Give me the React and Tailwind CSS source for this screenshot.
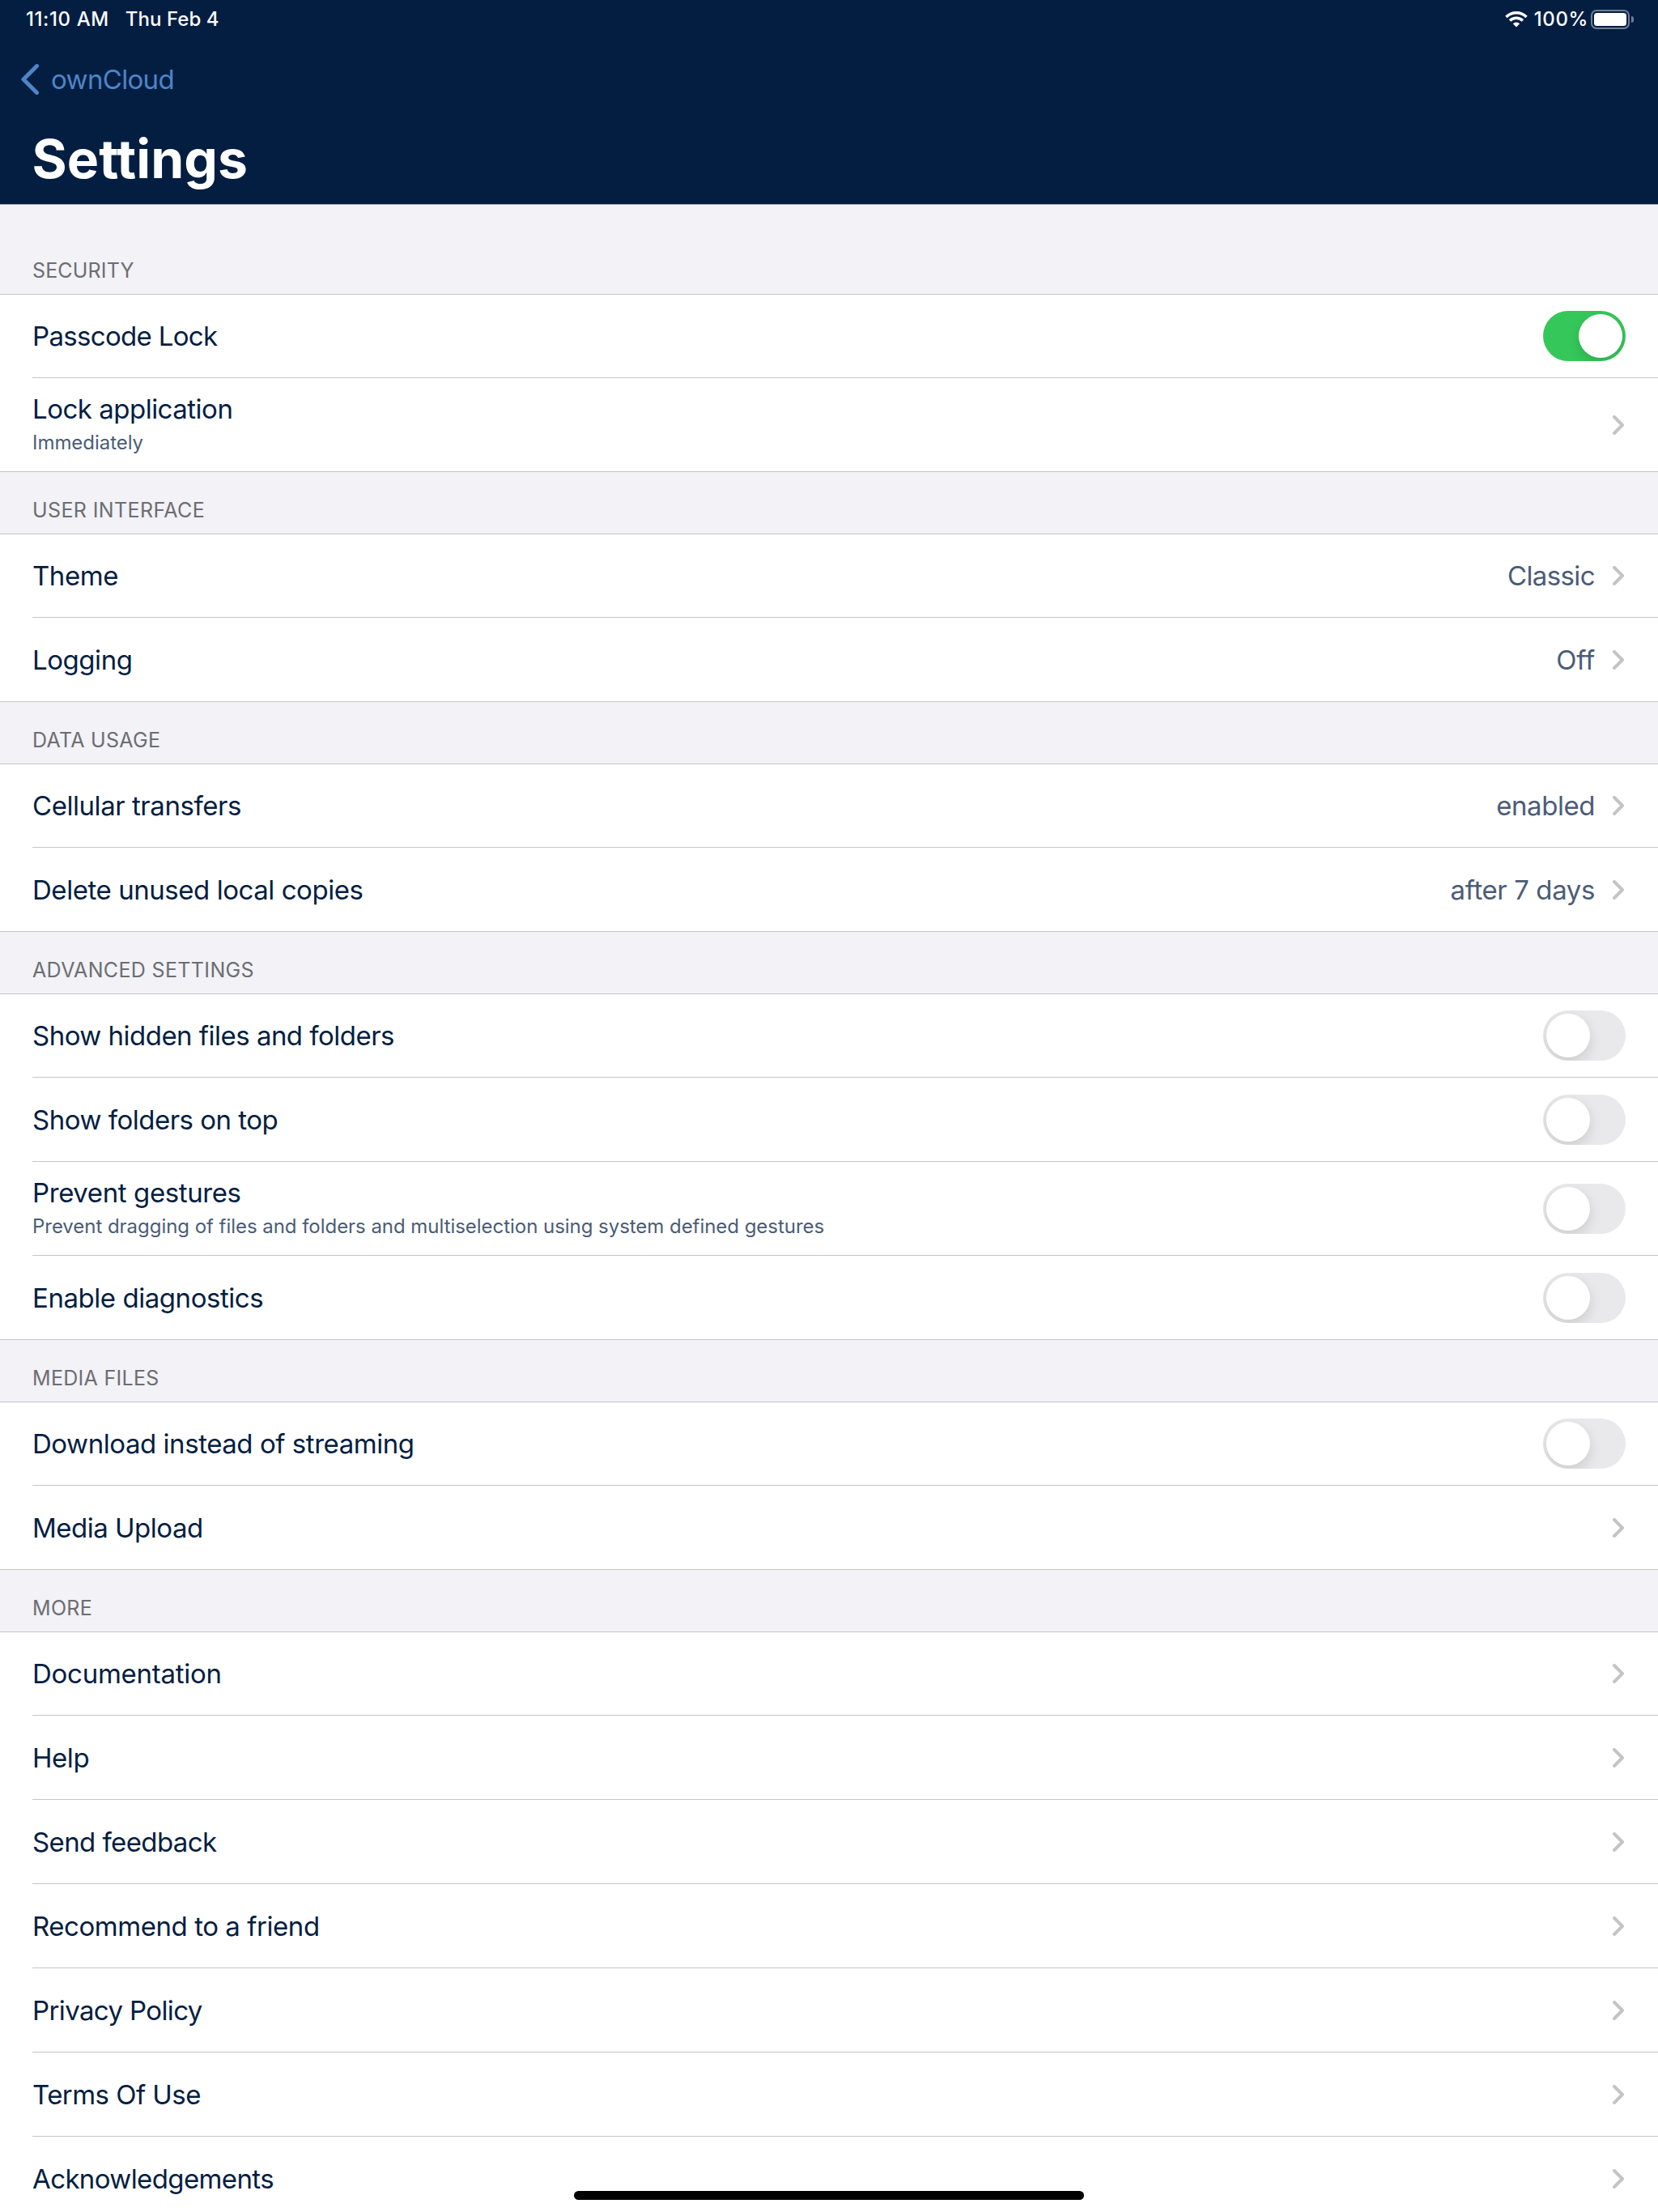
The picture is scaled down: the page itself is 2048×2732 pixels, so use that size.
const SECTIONS = [
  {
    title: "SECURITY",
    spacing: "tracking-[0.15px]",
    rows: [
      { label: "Passcode Lock", spacing: "tracking-[-0.68px]", toggle: true, on: true },
      { label: "Lock application", spacing: "tracking-[-0.5px]", detail: "Immediately" },
    ],
  },
  {
    title: "USER INTERFACE",
    spacing: "tracking-[0.38px]",
    rows: [
      { label: "Theme", value: "Classic", valueSpacing: "tracking-[-0.6px]" },
      { label: "Logging", value: "Off", valueSpacing: "tracking-[-0.2px]" },
    ],
  },
  {
    title: "DATA USAGE",
    rows: [
      { label: "Cellular transfers", value: "enabled" },
      { label: "Delete unused local copies", value: "after 7 days", valueSpacing: "tracking-[-0.4px]" },
    ],
  },
  {
    title: "ADVANCED SETTINGS",
    spacing: "tracking-[0.35px]",
    rows: [
      { label: "Show hidden files and folders", spacing: "tracking-[-0.52px]", toggle: true },
      { label: "Show folders on top", spacing: "tracking-[-0.5px]", toggle: true },
      {
        label: "Prevent gestures",
        spacing: "tracking-[-0.4px]",
        detail: "Prevent dragging of files and folders and multiselection using system defined gestures",
        toggle: true,
      },
      { label: "Enable diagnostics", toggle: true },
    ],
  },
  {
    title: "MEDIA FILES",
    rows: [
      { label: "Download instead of streaming", toggle: true },
      { label: "Media Upload", spacing: "tracking-[-0.5px]" },
    ],
  },
  {
    title: "MORE",
    rows: [
      { label: "Documentation", spacing: "tracking-[-0.26px]" },
      { label: "Help" },
      { label: "Send feedback", spacing: "tracking-[-0.6px]" },
      { label: "Recommend to a friend" },
      { label: "Privacy Policy", spacing: "tracking-[-0.62px]" },
      { label: "Terms Of Use", spacing: "tracking-[-0.55px]" },
      { label: "Acknowledgements", spacing: "tracking-[-0.62px]" },
    ],
  },
];

function Wifi() {
  return (
    <svg className="h-[20px] w-[28px]" viewBox="0 0 28 20" fill="none" stroke="white" strokeWidth="3.5">
      <path d="M1.5 7a17.7 17.7 0 0 1 25 0" />
      <path d="M6.1 11.6a11.2 11.2 0 0 1 15.8 0" />
      <path d="M14 19.5l-4.2-4.2a6 6 0 0 1 8.4 0z" fill="white" stroke="none" />
    </svg>
  );
}

function Battery() {
  return (
    <div className="flex items-center gap-[2px]">
      <div className="h-[24px] w-[48px] rounded-[7px] border-2 border-[#6f7e96] p-[2px]">
        <div className="h-full rounded-[3.5px] bg-white" />
      </div>
      <div className="h-[8px] w-[3px] rounded-r-full bg-[#6f7e96]" />
    </div>
  );
}

function Toggle({ on }) {
  return (
    <div
      className={
        "flex h-[62px] w-[102px] shrink-0 items-center overflow-hidden rounded-full p-1 " +
        (on ? "justify-end bg-[#35c759]" : "bg-[#e9e9eb]")
      }
    >
      <div className="size-[54px] rounded-full bg-white shadow-[0_6px_16px_rgba(0,0,0,0.13)]" />
    </div>
  );
}

function Chevron() {
  return (
    <svg
      className="mr-[2px] h-[24px] w-[14px] shrink-0"
      viewBox="0 0 14 24"
      fill="none"
      stroke="#c4c4c7"
      strokeWidth="4"
      strokeLinecap="round"
      strokeLinejoin="round"
    >
      <path d="M2 2l10 10L2 22" />
    </svg>
  );
}

function Row({ row, first, last }) {
  const height = row.detail ? "h-[116px]" : first ? "h-[103px]" : "h-[104px]";
  return (
    <li
      className={
        "flex items-center justify-between border-b border-[#c6c6c8] pr-10 " +
        height +
        (last ? " pl-10" : " ml-10")
      }
    >
      <div className={row.detail ? "pb-[2px]" : ""}>
        <div className={"text-[33px] leading-[40px] text-[#041e42] " + (row.spacing || "tracking-[-0.45px]")}>
          {row.label}
        </div>
        {row.detail && (
          <div className="mt-[6px] text-[24px] leading-[32px] tracking-[-0.04px] text-[#4b5c77]">{row.detail}</div>
        )}
      </div>
      {row.toggle ? (
        <Toggle on={row.on} />
      ) : (
        <div className="flex items-center gap-[22px]">
          {row.value && (
            <span className={"text-[33px] leading-[40px] text-[#4b5c77] " + (row.valueSpacing || "tracking-[-0.45px]")}>
              {row.value}
            </span>
          )}
          <Chevron />
        </div>
      )}
    </li>
  );
}

export default function App() {
  return (
    <div className="relative h-[2732px] w-[2048px] overflow-hidden bg-[#f2f2f7] font-['Inter',sans-serif]">
      <header className="h-[253px] border-b border-[#a3a6ae] bg-[#041e42]">
        <div className="flex h-[48px] items-center justify-between pl-[32px] pr-[30px] text-[24px] font-medium leading-[30px] text-white">
          <div className="flex gap-[20px]">
            <span className="tracking-[0.6px]">11:10 AM</span>
            <span className="tracking-[0.05px]">Thu Feb 4</span>
          </div>
          <div className="flex items-center">
            <Wifi />
            <span className="ml-[8px] mr-[3px] tracking-[0.6px]">100%</span>
            <Battery />
          </div>
        </div>
        <div className="flex h-[100px] items-center gap-[15px] pl-[26px]">
          <svg
            className="h-[38px] w-[22px]"
            viewBox="0 0 22 38"
            fill="none"
            stroke="#4e85c8"
            strokeWidth="5"
            strokeLinecap="round"
            strokeLinejoin="round"
          >
            <path d="M19.5 2.5L3 19l16.5 16.5" />
          </svg>
          <span className="text-[33px] leading-[40px] tracking-[-0.66px] text-[#4e85c8]">ownCloud</span>
        </div>
        <h1 className="pl-[39.5px] pt-[8px] text-[66px] font-bold leading-[80px] tracking-[0.05px] text-white">Settings</h1>
      </header>

      {SECTIONS.map((section, s) => (
        <section key={section.title}>
          <h2
            className={
              "flex items-end border-b border-[#c6c6c8] pb-[14px] pl-10 text-[25px] leading-[30px] text-[#6d6d72] " +
              (s === 0 ? "h-[111px] " : "h-[77px] ") +
              (section.spacing || "tracking-[0.3px]")
            }
          >
            {section.title}
          </h2>
          <ul className="bg-white">
            {section.rows.map((row, i) => (
              <Row key={row.label} row={row} first={i === 0} last={i === section.rows.length - 1} />
            ))}
          </ul>
        </section>
      ))}

      <div className="absolute bottom-[15px] left-[709px] h-[11px] w-[630px] rounded-full bg-black" />
    </div>
  );
}
